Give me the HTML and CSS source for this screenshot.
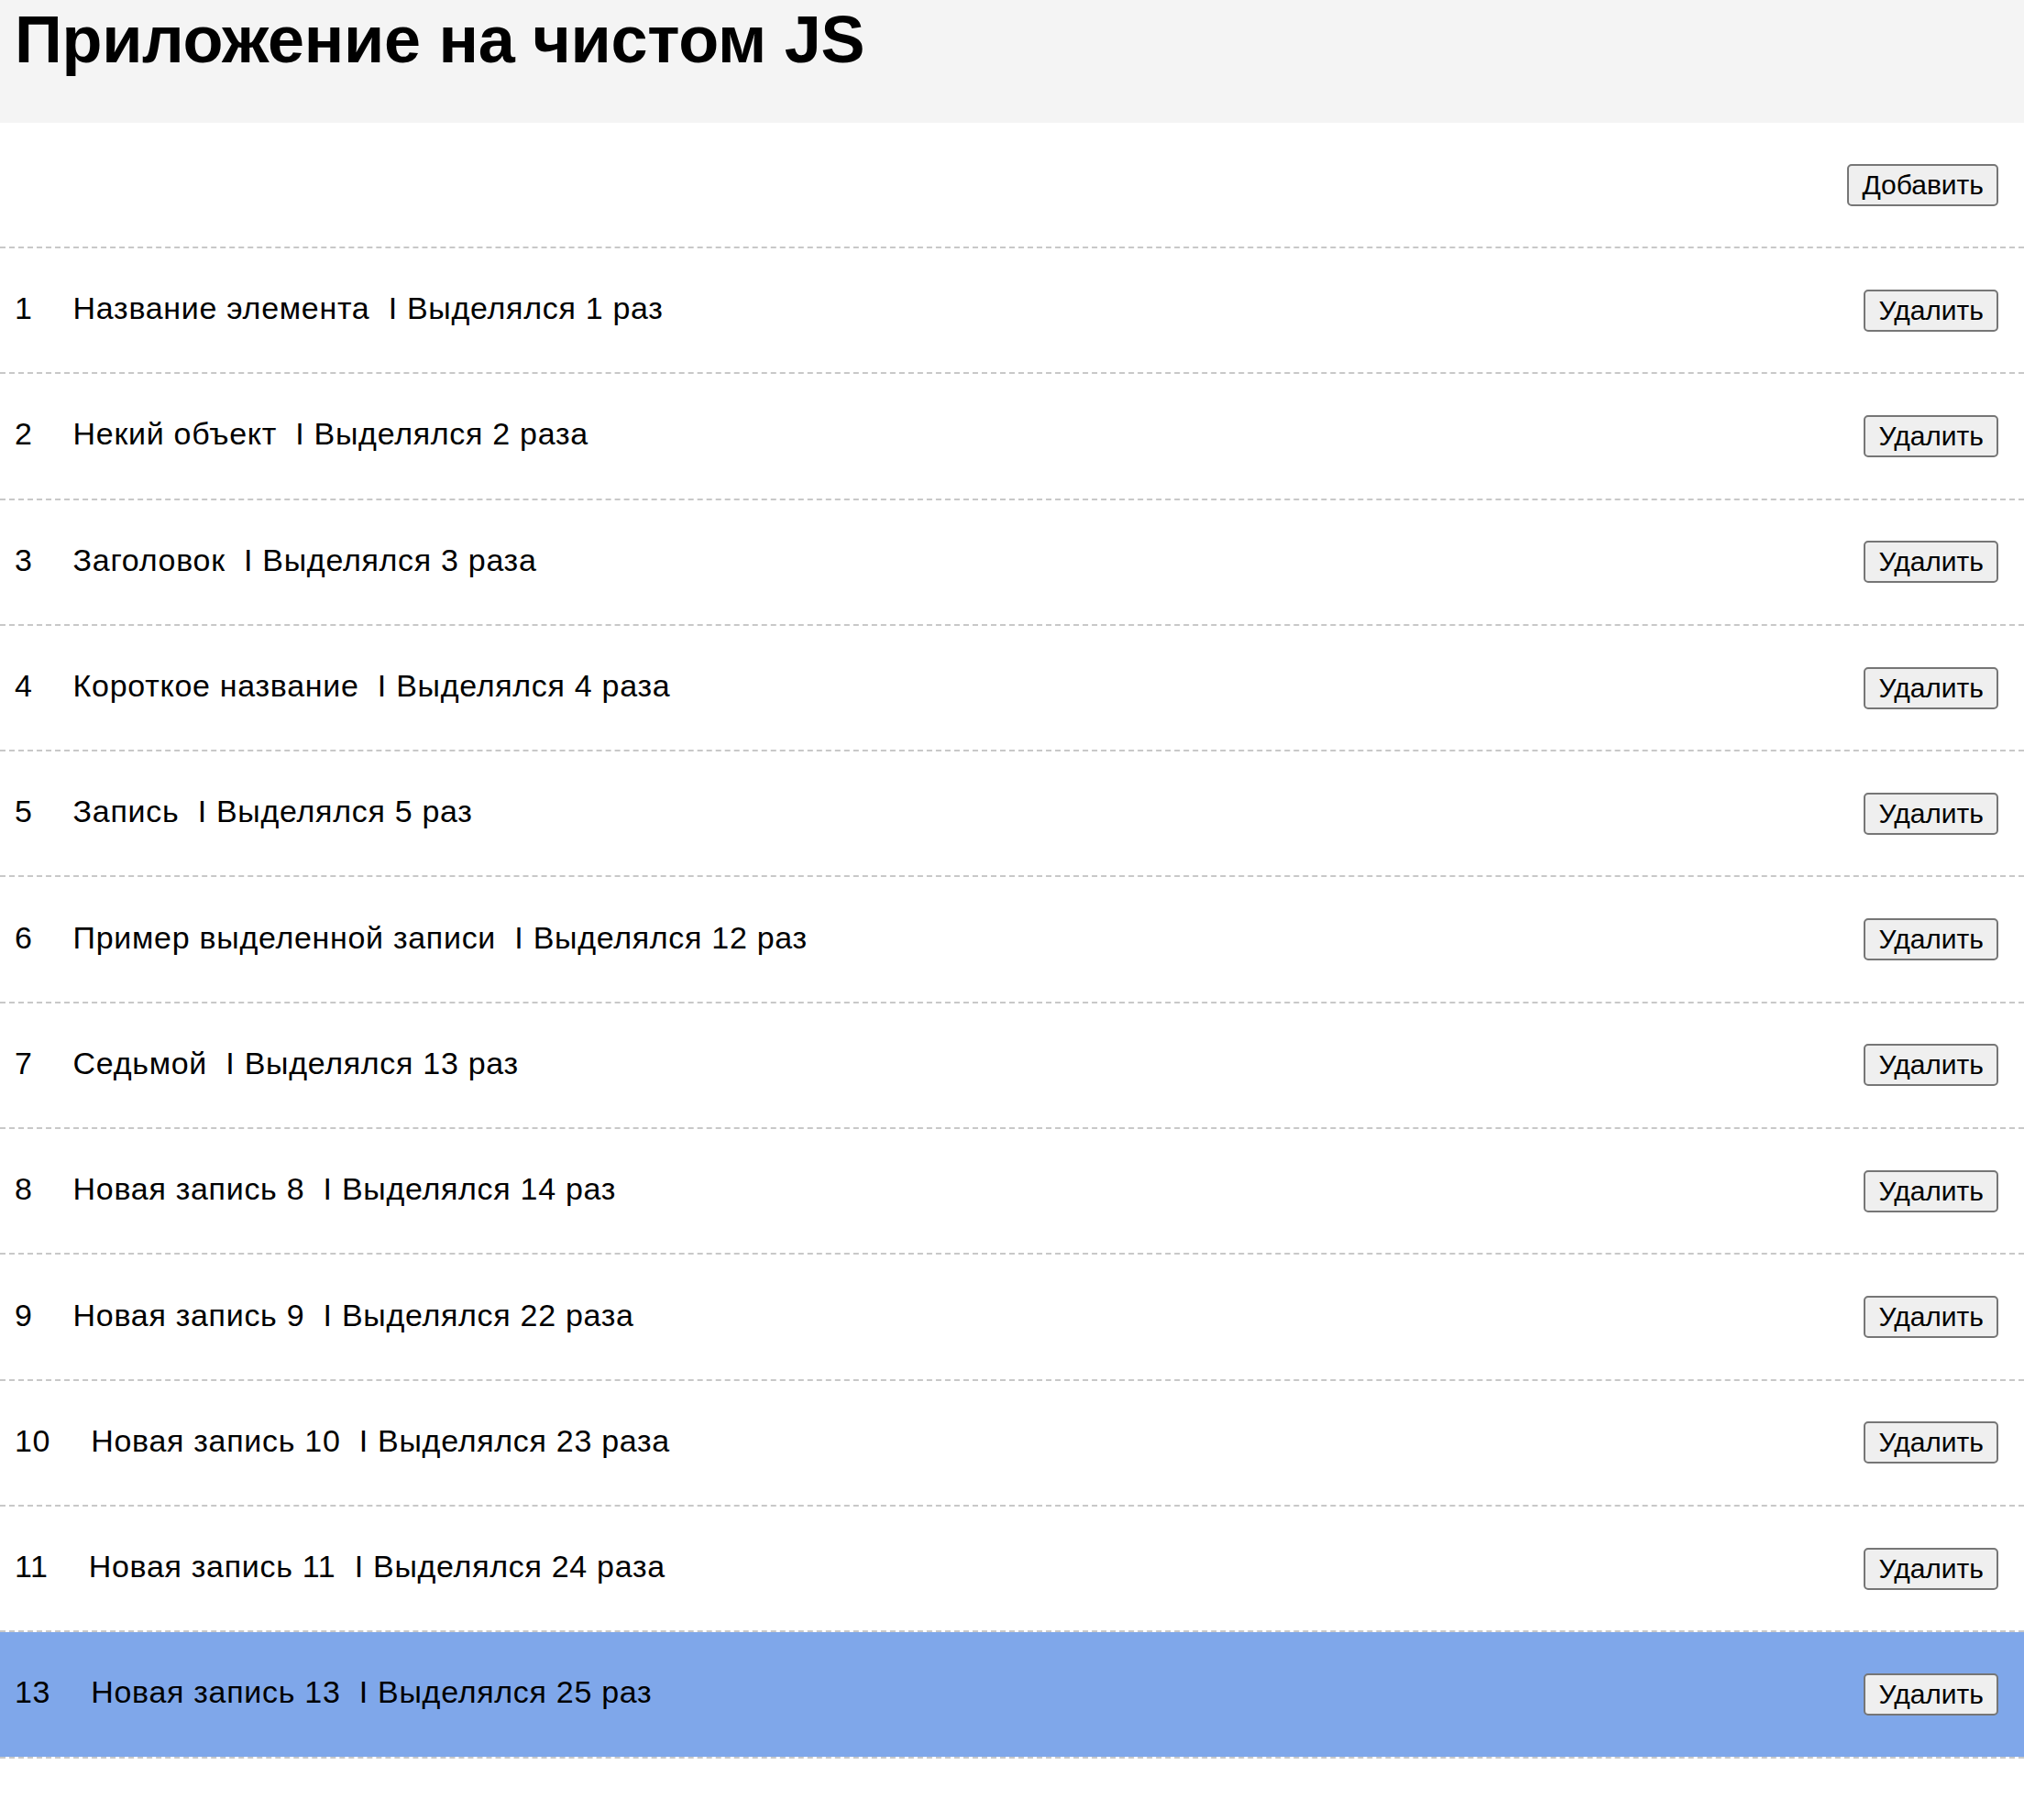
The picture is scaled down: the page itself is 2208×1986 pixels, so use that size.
FILE: index.html
```html
<!DOCTYPE html>
<html lang="ru">
<head>
<meta charset="utf-8">
<title>Приложение на чистом JS</title>
<link rel="stylesheet" href="styles.css">
</head>
<body>
<header class="header">
  <h1 class="title">Приложение на чистом JS</h1>
</header>
<main class="app">
  <div class="controls">
    <button class="btn" type="button">Добавить</button>
  </div>
  <ul class="list">
    <li class="item"><span class="item-text"><span class="item-code">1</span><span class="item-title">Название элемента&nbsp; I Выделялся 1 раз</span></span><button class="btn" type="button">Удалить</button></li>
    <li class="item"><span class="item-text"><span class="item-code">2</span><span class="item-title">Некий объект&nbsp; I Выделялся 2 раза</span></span><button class="btn" type="button">Удалить</button></li>
    <li class="item"><span class="item-text"><span class="item-code">3</span><span class="item-title">Заголовок&nbsp; I Выделялся 3 раза</span></span><button class="btn" type="button">Удалить</button></li>
    <li class="item"><span class="item-text"><span class="item-code">4</span><span class="item-title">Короткое название&nbsp; I Выделялся 4 раза</span></span><button class="btn" type="button">Удалить</button></li>
    <li class="item"><span class="item-text"><span class="item-code">5</span><span class="item-title">Запись&nbsp; I Выделялся 5 раз</span></span><button class="btn" type="button">Удалить</button></li>
    <li class="item"><span class="item-text"><span class="item-code">6</span><span class="item-title">Пример выделенной записи&nbsp; I Выделялся 12 раз</span></span><button class="btn" type="button">Удалить</button></li>
    <li class="item"><span class="item-text"><span class="item-code">7</span><span class="item-title">Седьмой&nbsp; I Выделялся 13 раз</span></span><button class="btn" type="button">Удалить</button></li>
    <li class="item"><span class="item-text"><span class="item-code">8</span><span class="item-title">Новая запись 8&nbsp; I Выделялся 14 раз</span></span><button class="btn" type="button">Удалить</button></li>
    <li class="item"><span class="item-text"><span class="item-code">9</span><span class="item-title">Новая запись 9&nbsp; I Выделялся 22 раза</span></span><button class="btn" type="button">Удалить</button></li>
    <li class="item"><span class="item-text"><span class="item-code">10</span><span class="item-title">Новая запись 10&nbsp; I Выделялся 23 раза</span></span><button class="btn" type="button">Удалить</button></li>
    <li class="item"><span class="item-text"><span class="item-code">11</span><span class="item-title">Новая запись 11&nbsp; I Выделялся 24 раза</span></span><button class="btn" type="button">Удалить</button></li>
    <li class="item item-selected"><span class="item-text"><span class="item-code">13</span><span class="item-title">Новая запись 13&nbsp; I Выделялся 25 раз</span></span><button class="btn" type="button">Удалить</button></li>
  </ul>
</main>
</body>
</html>
```
FILE: styles.css
```css
html, body {
  margin: 0;
  padding: 0;
  background: #ffffff;
  color: #000000;
  font-family: "Liberation Sans", Arial, sans-serif;
}

.header {
  background: #f4f4f4;
  padding: 2px 16px 0;
  height: 132px;
}

.title {
  margin: 0;
  font-size: 72px;
  font-weight: bold;
  line-height: normal;
  letter-spacing: -0.3px;
}

.controls {
  display: flex;
  justify-content: flex-end;
  align-items: center;
  height: 135px;
  padding: 0 28px 0 16px;
  border-bottom: 2px dashed #c8c8c8;
}

.list {
  list-style: none;
  margin: 0;
  padding: 0;
}

.item {
  display: flex;
  align-items: center;
  justify-content: space-between;
  height: 135.3px;
  padding: 0 28px 0 16px;
  border-bottom: 2px dashed #c8c8c8;
  font-size: 34px;
  letter-spacing: 0.7px;
}

.item-selected {
  background: #7fa7ea;
  background-clip: padding-box;
}

.item-text {
  display: flex;
  margin-bottom: 4px;
}

.item-code {
  margin-right: 44px;
}

.btn {
  font-family: "Liberation Sans", Arial, sans-serif;
  font-size: 30px;
  letter-spacing: 0;
  color: #000000;
  background: #efefef;
  border: 2px solid #767676;
  border-radius: 5px;
  padding: 4px 14px;
  line-height: normal;
}
```
